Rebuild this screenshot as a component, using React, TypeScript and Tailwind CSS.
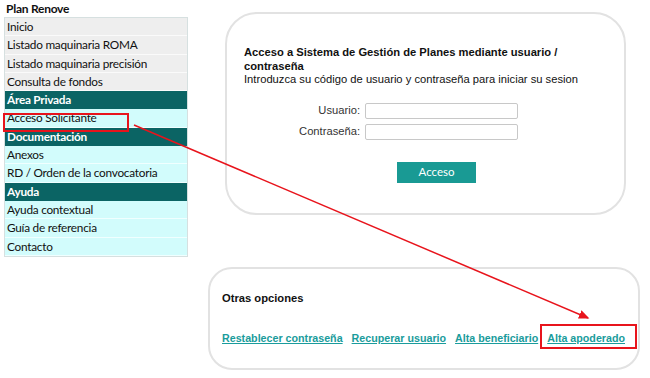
const menu: { label: string; kind: "gray" | "head" | "cyan" }[] = [
  { label: "Inicio", kind: "gray" },
  { label: "Listado maquinaria ROMA", kind: "gray" },
  { label: "Listado maquinaria precisión", kind: "gray" },
  { label: "Consulta de fondos", kind: "gray" },
  { label: "Área Privada", kind: "head" },
  { label: "Acceso Solicitante", kind: "cyan" },
  { label: "Documentación", kind: "head" },
  { label: "Anexos", kind: "cyan" },
  { label: "RD / Orden de la convocatoria", kind: "cyan" },
  { label: "Ayuda", kind: "head" },
  { label: "Ayuda contextual", kind: "cyan" },
  { label: "Guía de referencia", kind: "cyan" },
  { label: "Contacto", kind: "cyan" },
];

const rowClass = {
  gray: "bg-[#eeeeee] text-[#111] border-b border-[#fafafa]",
  head: "bg-[#0b6464] text-white font-bold",
  cyan: "bg-[#d2fcfc] text-[#111] border-b border-[#f0ffff]",
};

function Sidebar() {
  return (
    <aside className="ml-1 w-[184px] font-['Lato','Open_Sans',sans-serif] text-[11.8px] tracking-[-0.25px]">
      <div className="h-[17px] pl-[2px] text-[12px] font-bold leading-[17px] text-[#111]">Plan Renove</div>
      <ul className="border border-[#d6e0e0]">
        {menu.map((m) => (
          <li key={m.label} className={`h-[18.3px] whitespace-nowrap pl-[2px] leading-[18px] ${rowClass[m.kind]}`}>
            {m.label}
          </li>
        ))}
      </ul>
    </aside>
  );
}

function LoginCard() {
  return (
    <section className="ml-[17px] mt-3 h-[203px] w-[401px] rounded-[32px] border-2 border-[#e2e2e2] pl-[17px] pt-[32px] font-['Liberation_Sans',Arial,sans-serif] text-[11.2px] leading-[13.5px] text-[#111]">
      <p className="font-bold">Acceso a Sistema de Gestión de Planes mediante usuario /<br />contraseña</p>
      <p>Introduzca su código de usuario y contraseña para iniciar su sesion</p>
      <div className="mt-[16px] flex flex-col gap-[5px]">
        <label className="flex items-center gap-[5px]">
          <span className="w-[116px] text-right text-[#333]">Usuario:</span>
          <input className="h-[16px] w-[153px] rounded-[2px] border border-[#c8c8c8] bg-white" />
        </label>
        <label className="flex items-center gap-[5px]">
          <span className="w-[116px] text-right text-[#333]">Contraseña:</span>
          <input type="password" className="h-[16px] w-[153px] rounded-[2px] border border-[#c8c8c8] bg-white" />
        </label>
      </div>
      <button className="ml-[153px] mt-[22px] h-[21px] w-[79px] bg-[#199a94] font-['Lato',sans-serif] text-[11.5px] text-white">
        Acceso
      </button>
    </section>
  );
}

function OptionsCard() {
  const links = ["Restablecer contraseña", "Recuperar usuario", "Alta beneficiario", "Alta apoderado"];
  return (
    <section className="mt-[52px] h-[103px] w-[432px] rounded-[24px] border-2 border-[#e2e2e2] pl-[12px] pt-[21px] font-['Liberation_Sans',Arial,sans-serif] text-[11.2px] text-[#111]">
      <h2 className="font-bold">Otras opciones</h2>
      <div className="mt-[23px] flex gap-[9px] whitespace-nowrap text-[10.7px]">
        {links.map((l) => (
          <a key={l} href="#" className="font-bold text-[#1a9c9c] underline">
            {l}
          </a>
        ))}
      </div>
    </section>
  );
}

export default function App() {
  return (
    <div className="relative h-[378px] w-[650px] overflow-hidden bg-white">
      <div className="flex">
        <Sidebar />
        <main className="ml-[20px] flex flex-col">
          <LoginCard />
          <OptionsCard />
        </main>
      </div>
      {/* annotation overlay */}
      <svg className="pointer-events-none absolute left-0 top-0" width="650" height="378">
        <defs>
          <marker id="head" markerWidth="8" markerHeight="8" refX="6" refY="3" orient="auto">
            <path d="M0,0 L7,3 L0,6 z" fill="#e8141c" />
          </marker>
        </defs>
        <rect x="4" y="114" width="124" height="17" fill="none" stroke="#e8141c" strokeWidth="2" />
        <rect x="541" y="325" width="95" height="23" fill="none" stroke="#e8141c" strokeWidth="2" />
        <line x1="134" y1="125" x2="588" y2="318" stroke="#e8141c" strokeWidth="1.5" markerEnd="url(#head)" />
      </svg>
    </div>
  );
}
